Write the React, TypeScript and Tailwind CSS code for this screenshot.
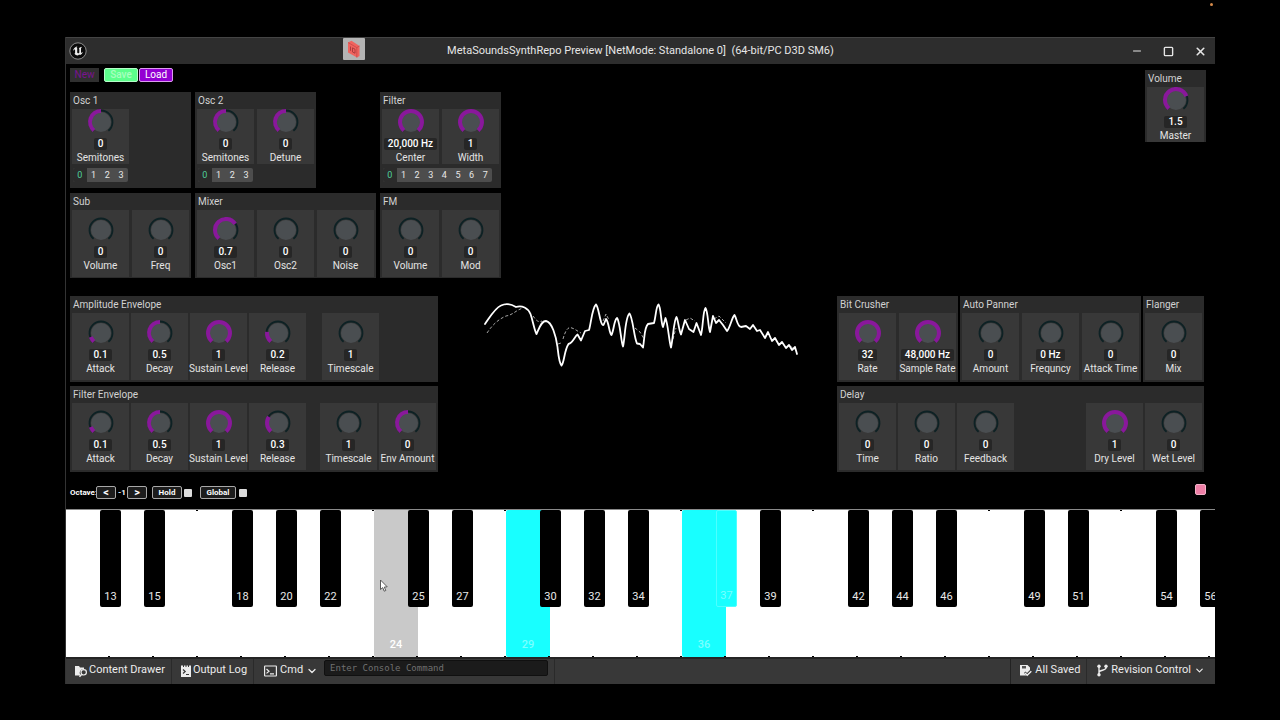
import React, { useState } from "react";
import { ChevronDown, Minus, Square, X } from "lucide-react";

interface KnobProps {
  label: string;
  value: string;
  // Position of the knob, from 0 to 1
  level?: number;
  compact?: boolean;
}

interface PanelProps {
  title: string;
  className?: string;
  children: React.ReactNode;
}

const KNOB_SWEEP = 280;

function arcPath(from: number, to: number, radius: number) {
  const point = (deg: number) => {
    const rad = ((deg - 90) * Math.PI) / 180;
    return `${14 + radius * Math.cos(rad)} ${14 + radius * Math.sin(rad)}`;
  };
  const large = to - from > 180 ? 1 : 0;
  return `M${point(from)} A${radius} ${radius} 0 ${large} 1 ${point(to)}`;
}

function Knob({ label, value, level = 0, compact = false }: KnobProps) {
  const start = -KNOB_SWEEP / 2;
  const end = start + KNOB_SWEEP * level;

  return (
    <div
      className={`flex w-[57px] shrink-0 flex-col items-center bg-[#383838] ${
        compact ? "h-[55px]" : "h-[67px] pt-[7px]"
      }`}
    >
      <svg viewBox="0 1 28 27" className="h-[27px] w-7 shrink-0" role="img" aria-label={`${label} knob`}>
        <path d={arcPath(start, -start, 11.5)} fill="none" stroke="#0d2124" strokeWidth="1.8" />
        <circle cx="14" cy="14" r="10" fill="#4a4e51" />
        {level > 0 && (
          <path d={arcPath(start, end, 11)} fill="none" stroke="#89189b" strokeWidth="4" />
        )}
      </svg>
      <span className="mt-[2px] rounded-xs bg-[#262626] px-1 text-[10px] leading-[12px] font-medium text-white">
        {value}
      </span>
      <span className="mt-[2px] text-[10px] leading-[12px] whitespace-nowrap text-[#e4e4e4]">{label}</span>
    </div>
  );
}

function Panel({ title, className = "", children }: PanelProps) {
  return (
    <section className={`shrink-0 bg-[#2b2b2b] px-[2px] ${className}`}>
      <h2 className="h-[17px] pl-px text-[10px] leading-[17px] whitespace-nowrap text-[#d2d2d2]">{title}</h2>
      {children}
    </section>
  );
}

function WaveSelect({ count, className }: { count: number; className: string }) {
  const [active, setActive] = useState(0);

  return (
    <div className={`mt-1 ml-px flex h-[14px] overflow-hidden rounded-xs bg-[#4d4d4d] ${className}`}>
      {Array.from({ length: count }, (_, i) => (
        <button
          key={i}
          onClick={() => setActive(i)}
          className={`flex-1 text-[9px] leading-[14px] ${
            i === active ? "bg-[#2b2b2b] text-[#4fcf9d]" : "text-[#e8e8e8]"
          }`}
        >
          {i}
        </button>
      ))}
    </div>
  );
}

const TRACE =
  "M15 34 C20 27 25 18 31 15.500 C36 13 42 14.500 46 17 C52 15 58 18 60.500 24 C63 31 64 39 66.500 44 C69 39 71 31 76 31 C82 32 86 46 87.500 57 C88.500 66 89 73 91.500 75.500 C94.500 72 94 61 98.500 54 C103 53 105 46 107.500 44.500 L111 50.500 L115 41 L119 40 C121 34 122 18 126 14.500 C129 17 130 36 133.500 35 L136 29 C139 32 139 43 141.500 45 C144 40 144 30 147 28 C150 31 151 52 153 56.500 C155 49 155 27 159.500 23.500 C163 28 164 48 167 53.500 L170 54 L173 57.500 C175 46 174 38 178 34 L184 33 C186 26 186 16 188.500 14.500 C191 17 191 34 193 37 L195.500 28 C198 34 199 51 201 57.500 C203 49 204 29 206.500 27 C208 29 209 41 211 44.500 L215 30 L219 39 L223.500 42 L226.500 33 L231 45 C233 38 233 20 235.500 18 C238 21 238 37 240 42 L243 26 L246 33 L249 30 L253 35 L257 41 C260 38 262 27 264.500 25 C267 29 267 36 271 37 L276 36 L280 39 L283 35 L287 41 L290 40 L295 48 L298 42 L302 51 L305 48 L309 55 L312 52 L316 58 L319 55 L322 60 L325 57 L327 64";

const GHOST =
  "M17 43 C23 34 29 29 36 26 C43 25 46 20 53 18 M63 26 C66 30 68 33 72 31 M88 54 L91 53 M93 49 C95 42 97 38 100 37.500 C104 38 107 41 111 43 M133 31 L136 24 L139 30 M165 38 L170 42 L174 49 M203 49 L206 38 M216 30 L220 28 L225 31 M244 29 L249 26 L256 33 M320 56 L326 60";

function Scope() {
  return (
    <svg
      viewBox="0 6 340 84"
      className="ml-1 h-[84px] w-[340px]"
      fill="none"
      stroke="white"
      role="img"
      aria-label="Waveform"
    >
      <path d={TRACE} strokeWidth="1.8" strokeLinejoin="round" strokeLinecap="round" />
      <path d={GHOST} strokeWidth="1" strokeDasharray="3 2" opacity="0.65" />
    </svg>
  );
}

const BLACK_STEPS = [0, 2, 5, 7, 9];
const WHITE_STEPS = [0, 2, 4, 5, 7, 9, 11];
const HELD_NOTES = [29, 36, 37];
const HOVERED_NOTE = 24;
const LAST_NOTE = 57;

function Piano() {
  const whiteNotes = Array.from({ length: 27 }, (_, i) => 12 + Math.floor(i / 7) * 12 + WHITE_STEPS[i % 7]);

  return (
    <div className="flex h-[148px] overflow-hidden border-t border-[#8a8a8a] bg-white">
      {whiteNotes.map((note) => {
        const held = HELD_NOTES.includes(note);
        const hovered = note === HOVERED_NOTE;
        const sharp = note + 1;
        const sharpHeld = HELD_NOTES.includes(sharp);
        const hasSharp = BLACK_STEPS.includes(note % 12) && sharp < LAST_NOTE;
        return (
          <div key={note} className="relative w-11 shrink-0">
            <button
              aria-label={`Key ${note}`}
              className={`flex h-full w-full items-end justify-center rounded-xs pb-[5px] text-[11px] leading-[14px] font-medium ${
                held ? "bg-[#18ffff] text-[#7affff]" : hovered ? "bg-[#c9c9c9] text-white" : "bg-white"
              }`}
            >
              {(held || hovered) && note}
            </button>
            {!hasSharp && <span className="absolute top-0 right-0 h-px w-[2px] bg-black" />}
            <span className="absolute right-0 bottom-0 h-px w-[2px] bg-black" />
            {hovered && (
              <svg viewBox="0 0 10 14" className="absolute top-[69px] left-[5px] h-[14px] w-[10px]" aria-hidden="true">
                <path
                  d="M1.500 1 V10.500 L3.700 8.600 L5.200 12.200 L6.800 11.500 L5.300 8.100 L8.200 7.800 Z"
                  fill="white"
                  stroke="#4a4a4a"
                  strokeWidth="0.9"
                />
              </svg>
            )}
            {hasSharp && (
              <button
                className={`absolute top-0 -right-[11px] z-10 flex h-[97px] w-[21px] items-end justify-center rounded-xs pb-[3px] text-[11px] leading-[14px] ${
                  sharpHeld ? "border border-[#4dffff] bg-[#18ffff] text-[#7affff]" : "bg-black text-[#e8e8e8]"
                }`}
              >
                {sharp}
              </button>
            )}
          </div>
        );
      })}
    </div>
  );
}

function UnrealLogo() {
  return (
    <svg viewBox="0 0 18 18" className="h-[18px] w-[18px]" aria-hidden="true">
      <circle cx="9" cy="9" r="8.200" fill="#0b0b0b" stroke="#8d8d8d" strokeWidth="1" />
      <path
        d="M8.400 4.200 C5.900 4.900 4.300 6.700 3.900 9 C4.500 8.100 5.200 7.500 5.700 7.500 C6 7.500 6.100 7.700 6.100 8 V11 C6.100 11.500 5.800 11.600 5.300 11.500 C6 12.700 7.300 13.400 8.900 13.500 L10.100 12.400 L11 13.100 C12.500 12.400 13.500 11.200 14 9.700 C13.200 10.600 12.500 11 12 10.800 V6.800 C12 6 12.500 5.200 13.200 4.700 C11.800 4.900 10.600 5.500 9.800 6.400 C10.200 6.400 10.300 6.600 10.300 7 V10.700 C9.700 11.500 8.200 11.500 8.200 10.500 V6 C8.200 5.500 8 5.300 7.500 5.400 Z"
        fill="#ececec"
      />
    </svg>
  );
}

function TitleBar() {
  return (
    <header className="grid h-[27px] grid-cols-[1fr_auto_1fr] items-center border-t border-[#444444] bg-[#2d2d2d]">
      <div className="flex h-full items-center justify-between pl-[3px]">
        <UnrealLogo />
        <svg viewBox="0 0 22 22" className="mr-[82px] h-[22px] w-[22px] self-start" aria-hidden="true">
          <rect width="22" height="22" rx="1" fill="#b4b4b4" />
          <path d="M5 4.500 L8.500 2.700 L16.500 8 V18 L14 19.500 L5 14.500 Z" fill="#f0635e" />
          <path d="M5 4.500 L13.800 9.600 V19.500 M13.800 9.600 L16.500 8" fill="none" stroke="#c8474a" strokeWidth="0.8" />
          <path d="M7.500 8.500 V12.800 M9.500 9.800 V14 L12 15.200 V11.200 Z" fill="none" stroke="#a5383c" strokeWidth="0.9" />
        </svg>
      </div>
      <h1 className="text-[11px] whitespace-pre text-[#e6e6e6]">
        {"MetaSoundsSynthRepo Preview [NetMode: Standalone 0]  (64-bit/PC D3D SM6)"}
      </h1>
      <div className="flex items-center justify-end gap-5 pr-2 text-[#e6e6e6]">
        <button aria-label="Minimize">
          <Minus size={12} strokeWidth={2} />
        </button>
        <button aria-label="Maximize">
          <Square size={11} strokeWidth={3} />
        </button>
        <button aria-label="Close">
          <X size={13} strokeWidth={3} />
        </button>
      </div>
    </header>
  );
}

function OctaveBar() {
  const smallButton =
    "h-[13px] rounded-xs border border-[#a8a8a8] bg-[#1c1c1c] text-[8px] leading-[11px] font-bold text-white";

  return (
    <div className="flex h-[13px] items-center text-[8px] font-bold text-white">
      <span className="w-[26px]">Octave:</span>
      <button aria-label="Octave down" className={`${smallButton} w-5 text-[11px]`}>
        &lt;
      </button>
      <span className="w-[11px] pl-[2px]">-1</span>
      <button aria-label="Octave up" className={`${smallButton} w-5 text-[11px]`}>
        &gt;
      </button>
      <label htmlFor="hold" className={`${smallButton} ml-[5px] w-[30px] text-center`}>
        Hold
      </label>
      <input id="hold" type="checkbox" className="ml-[2px] h-2 w-2 appearance-none rounded-[1px] bg-[#dcdcdc]" />
      <label htmlFor="global" className={`${smallButton} ml-2 w-9 text-center`}>
        Global
      </label>
      <input id="global" type="checkbox" className="ml-[3px] h-2 w-2 appearance-none rounded-[1px] bg-[#dcdcdc]" />
    </div>
  );
}

function StatusBar() {
  return (
    <footer className="flex h-[27px] items-center border-t-2 border-[#242424] bg-[#383838] text-[11px] text-[#ececec]">
      <button className="flex h-full items-center gap-px border-r border-[#2a2a2a] pr-[6px] pb-[2px] pl-2">
        <svg viewBox="0 0 14 14" className="h-[14px] w-[14px]" aria-hidden="true">
          <path d="M1 2 H5 L6 3.500 H10 V5 A4 4 0 0 0 6.500 11.500 H1 Z" fill="currentColor" />
          <circle cx="9.700" cy="8.300" r="2.700" fill="none" stroke="currentColor" strokeWidth="1.200" />
          <path d="M7.700 10.300 L5.500 12.800" stroke="currentColor" strokeWidth="1.500" />
        </svg>
        Content Drawer
      </button>
      <button className="flex h-full items-center gap-px border-r border-[#2a2a2a] pr-[6px] pb-[2px] pl-2">
        <svg viewBox="0 0 12 14" className="h-[14px] w-3" aria-hidden="true">
          <path d="M1 1.500 H3 V3 H4 V1.500 H5.500 V3 H6.500 V1.500 H8 V3 H9 V1.500 H11 V13 H1 Z" fill="currentColor" />
          <path d="M3 5.500 L5.200 7.500 L3 9.500 M6 10.500 H9" fill="none" stroke="#383838" strokeWidth="1.200" />
        </svg>
        Output Log
      </button>
      <button className="flex h-full items-center gap-[3px] pr-[6px] pb-[2px] pl-[10px]">
        <svg viewBox="0 0 13 12" className="h-3 w-[13px]" aria-hidden="true">
          <rect x="0.600" y="1" width="11.800" height="10" rx="0.500" fill="none" stroke="currentColor" strokeWidth="1.200" />
          <path d="M2.500 4 L5 6.200 L2.500 8.400 M6 8.800 H10" fill="none" stroke="currentColor" strokeWidth="1.200" />
        </svg>
        Cmd
        <ChevronDown size={12} strokeWidth={2.5} />
      </button>
      <input
        aria-label="Console command"
        placeholder="Enter Console Command"
        className="mt-px h-[16px] w-[224px] self-start rounded-xs border border-[#101010] bg-[#1b1b1b] px-[5px] font-['DejaVu_Sans_Mono',monospace] text-[9px] placeholder:text-[#707070]"
      />
      <span className="ml-1.5 h-full w-px bg-[#2a2a2a]" />
      <button className="ml-auto flex h-full items-center gap-[3px] border-l border-[#222222] pr-[6px] pb-[2px] pl-2">
        <svg viewBox="0 0 13 13" className="h-[13px] w-[13px]" aria-hidden="true">
          <path d="M1 1 H8.500 L11 3.500 V6 L8 9 L6.500 7.500 L5 9 L7.500 11.500 H1 Z" fill="currentColor" />
          <path d="M3 2 H7 V4.500 H3 Z" fill="#555555" />
          <path d="M6 9 L8.200 11.200 L12.300 7.200" fill="none" stroke="currentColor" strokeWidth="1.500" />
        </svg>
        All Saved
      </button>
      <button className="flex h-full items-center gap-[3px] border-l border-[#2a2a2a] pr-[10px] pb-[2px] pl-[10px]">
        <svg viewBox="0 0 11 13" className="h-[13px] w-[11px]" aria-hidden="true">
          <path d="M2 2 V11 M9 2.500 V4 C9 6.500 2 6 2 8.500" fill="none" stroke="currentColor" strokeWidth="1.400" />
          <circle cx="2" cy="2.200" r="1.700" fill="currentColor" />
          <circle cx="9" cy="2.200" r="1.700" fill="currentColor" />
          <circle cx="2" cy="10.800" r="1.700" fill="currentColor" />
        </svg>
        Revision Control
        <ChevronDown size={11} strokeWidth={2.5} />
      </button>
    </footer>
  );
}

export default function App() {
  return (
    <div className="relative min-h-screen overflow-hidden bg-black px-[65px] pt-[37px] font-[Roboto,sans-serif]">
      {/* Recording indicator */}
      <span className="absolute top-[3px] right-[67px] h-[3px] w-[3px] rounded-full bg-[#d58a4a]" />

      <div className="border-l border-[#333333]">
        <TitleBar />

        <main className="pt-1 pr-[9px] pl-1">
          <div className="flex items-start justify-between">
            <div>
              <div className="flex h-[14px] gap-px text-[10px] leading-[12px]">
                <button className="mr-1 w-[29px] bg-[#303030] text-[#7b1391]">New</button>
                <button className="w-[34px] rounded-xs border border-[#b5ffc9] bg-[#5dff8c] font-medium text-[#a8ffc0]">
                  Save
                </button>
                <button className="w-[34px] rounded-xs border border-[#dd9bf0] bg-[#9400d3] text-white">Load</button>
              </div>

              <div className="mt-[10px] flex h-24">
                <Panel title="Osc 1" className="w-[121px]">
                  <Knob compact label="Semitones" value="0" level={0.5} />
                  <WaveSelect count={4} className="w-[55px]" />
                </Panel>
                <Panel title="Osc 2" className="ml-1 w-[121px]">
                  <div className="flex gap-[3px]">
                    <Knob compact label="Semitones" value="0" level={0.5} />
                    <Knob compact label="Detune" value="0" level={0.5} />
                  </div>
                  <WaveSelect count={4} className="w-[55px]" />
                </Panel>
                <Panel title="Filter" className="ml-16 w-[121px]">
                  <div className="flex gap-[3px]">
                    <Knob compact label="Center" value="20,000 Hz" level={1} />
                    <Knob compact label="Width" value="1" level={1} />
                  </div>
                  <WaveSelect count={8} className="w-[109px]" />
                </Panel>
              </div>

              <div className="mt-[5px] flex h-[85px] gap-1">
                <Panel title="Sub" className="w-[121px]">
                  <div className="flex gap-[3px]">
                    <Knob label="Volume" value="0" />
                    <Knob label="Freq" value="0" />
                  </div>
                </Panel>
                <Panel title="Mixer" className="w-[181px]">
                  <div className="flex gap-[3px]">
                    <Knob label="Osc1" value="0.7" level={0.7} />
                    <Knob label="Osc2" value="0" />
                    <Knob label="Noise" value="0" />
                  </div>
                </Panel>
                <Panel title="FM" className="w-[121px]">
                  <div className="flex gap-[3px]">
                    <Knob label="Volume" value="0" />
                    <Knob label="Mod" value="0" />
                  </div>
                </Panel>
              </div>
            </div>

            <Panel title="Volume" className="mt-[2px] w-[61px]">
              <Knob compact label="Master" value="1.5" level={0.75} />
            </Panel>
          </div>

          <div className="mt-[18px] flex items-start justify-between pr-[2px]">
            <div className="flex flex-col gap-1">
              <Panel title="Amplitude Envelope" className="h-[86px] w-[368px]">
                <div className="flex gap-[2px]">
                  <Knob label="Attack" value="0.1" level={0.1} />
                  <Knob label="Decay" value="0.5" level={0.5} />
                  <Knob label="Sustain Level" value="1" level={1} />
                  <Knob label="Release" value="0.2" level={0.2} />
                  <div className="w-3" />
                  <Knob label="Timescale" value="1" />
                </div>
              </Panel>
              <Panel title="Filter Envelope" className="h-[86px] w-[368px]">
                <div className="flex gap-[2px]">
                  <Knob label="Attack" value="0.1" level={0.1} />
                  <Knob label="Decay" value="0.5" level={0.5} />
                  <Knob label="Sustain Level" value="1" level={1} />
                  <Knob label="Release" value="0.3" level={0.3} />
                  <div className="grow" />
                  <Knob label="Timescale" value="1" />
                  <Knob label="Env Amount" value="0" level={0.5} />
                </div>
              </Panel>
            </div>

            <Scope />

            <div className="flex flex-col gap-1">
              <div className="flex h-[86px] gap-[2px]">
                <Panel title="Bit Crusher" className="w-[121px]">
                  <div className="flex gap-[3px]">
                    <Knob label="Rate" value="32" level={1} />
                    <Knob label="Sample Rate" value="48,000 Hz" level={1} />
                  </div>
                </Panel>
                <Panel title="Auto Panner" className="w-[181px]">
                  <div className="flex gap-[3px]">
                    <Knob label="Amount" value="0" />
                    <Knob label="Frequncy" value="0 Hz" />
                    <Knob label="Attack Time" value="0" />
                  </div>
                </Panel>
                <Panel title="Flanger" className="w-[61px]">
                  <Knob label="Mix" value="0" />
                </Panel>
              </div>
              <Panel title="Delay" className="h-[86px]">
                <div className="flex gap-[2px]">
                  <Knob label="Time" value="0" />
                  <Knob label="Ratio" value="0" />
                  <Knob label="Feedback" value="0" />
                  <div className="grow" />
                  <Knob label="Dry Level" value="1" level={1} />
                  <Knob label="Wet Level" value="0" />
                </div>
              </Panel>
            </div>
          </div>

          <div className="flex h-[37px] items-center justify-between pt-1">
            <OctaveBar />
            <button aria-label="Panic" className="mb-1.5 h-[11px] w-[11px] rounded-xs border border-[#f3b3c9] bg-[#ee7fa6]" />
          </div>
        </main>

        <Piano />
        <StatusBar />
      </div>
    </div>
  );
}
